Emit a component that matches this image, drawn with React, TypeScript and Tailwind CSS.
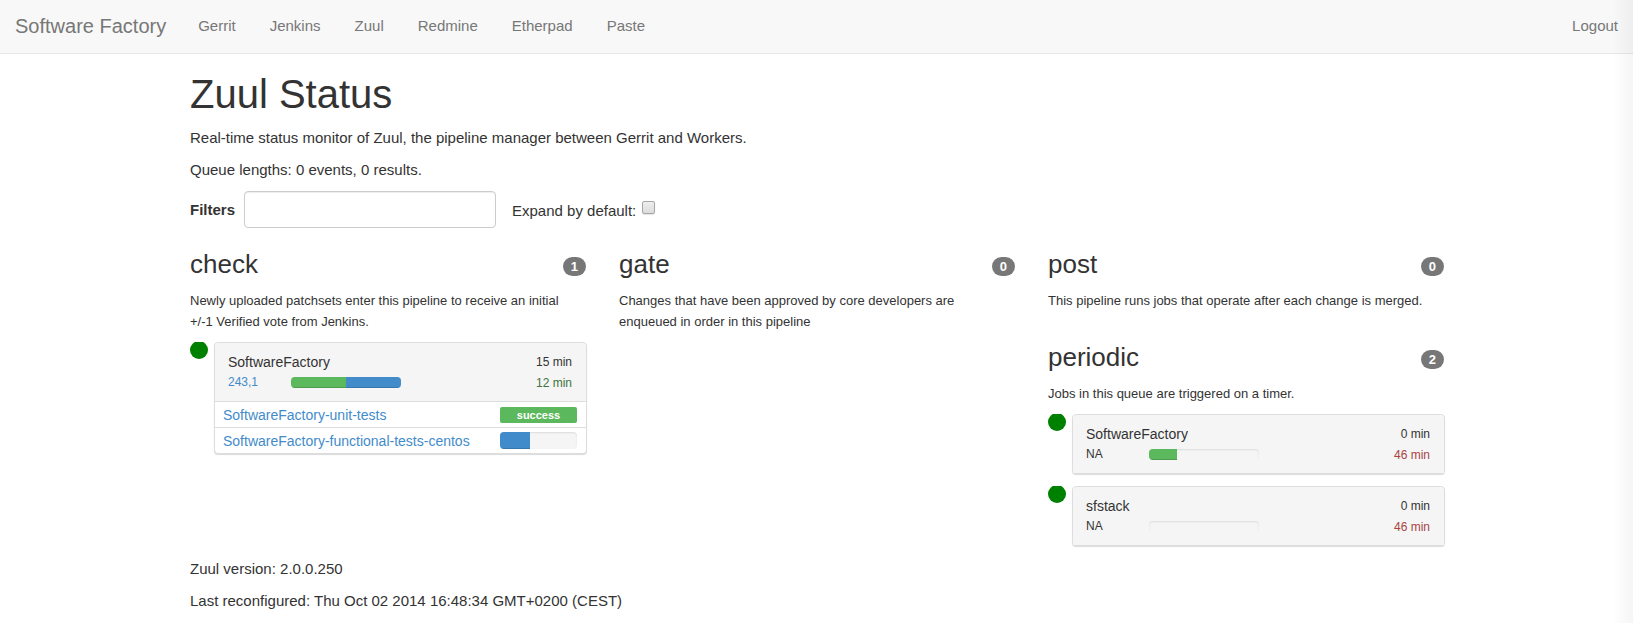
import React from "react";

type Segment = { percent: number; tone: "green" | "blue" };
type Job = { name: string; result?: string; segments?: Segment[] };
type Change = {
  project: string;
  id: string;
  linked?: boolean;
  segments: Segment[];
  remaining: string;
  enqueued: string;
  late?: boolean;
  jobs?: Job[];
};
type Pipeline = { name: string; description: string; changes: Change[] };

const links = ["Gerrit", "Jenkins", "Zuul", "Redmine", "Etherpad", "Paste"];

const columns: Pipeline[][] = [
  [
    {
      name: "check",
      description:
        "Newly uploaded patchsets enter this pipeline to receive an initial +/-1 Verified vote from Jenkins.",
      changes: [
        {
          project: "SoftwareFactory",
          id: "243,1",
          linked: true,
          segments: [
            { percent: 50, tone: "green" },
            { percent: 50, tone: "blue" },
          ],
          remaining: "15 min",
          enqueued: "12 min",
          jobs: [
            { name: "SoftwareFactory-unit-tests", result: "success" },
            {
              name: "SoftwareFactory-functional-tests-centos",
              segments: [{ percent: 39, tone: "blue" }],
            },
          ],
        },
      ],
    },
  ],
  [
    {
      name: "gate",
      description:
        "Changes that have been approved by core developers are enqueued in order in this pipeline",
      changes: [],
    },
  ],
  [
    {
      name: "post",
      description: "This pipeline runs jobs that operate after each change is merged.",
      changes: [],
    },
    {
      name: "periodic",
      description: "Jobs in this queue are triggered on a timer.",
      changes: [
        {
          project: "SoftwareFactory",
          id: "NA",
          segments: [{ percent: 25, tone: "green" }],
          remaining: "0 min",
          enqueued: "46 min",
          late: true,
        },
        {
          project: "sfstack",
          id: "NA",
          segments: [],
          remaining: "0 min",
          enqueued: "46 min",
          late: true,
        },
      ],
    },
  ],
];

function Progress({ segments, className }: { segments: Segment[]; className: string }) {
  return (
    <div
      className={`flex overflow-hidden rounded bg-[#f5f5f5] shadow-[inset_0_1px_2px_rgba(0,0,0,0.1)] ${className}`}
    >
      {segments.map((s) => (
        <div
          key={s.tone}
          className={`shadow-[inset_0_-1px_0_rgba(0,0,0,0.15)] ${
            s.tone === "green" ? "bg-[#5cb85c]" : "bg-[#428bca]"
          }`}
          style={{ width: `${s.percent}%` }}
        />
      ))}
    </div>
  );
}

function ChangePanel({ change }: { change: Change }) {
  return (
    <div className="flex items-start gap-1.5">
      <svg width="18" height="17" viewBox="0 0 18 17" className="shrink-0" aria-hidden="true">
        <circle cx="9" cy="8" r="9" fill="#008000" />
      </svg>
      <div className="min-w-0 flex-1 rounded border border-[#dddddd] bg-white shadow-[0_1px_1px_rgba(0,0,0,0.15)]">
        <div className="flex justify-between rounded-t bg-[#f5f5f5] pt-[9px] pr-[14px] pb-2 pl-[13px]">
          <div>
            <div className="text-[14px] leading-5">{change.project}</div>
            <div className="flex items-center text-[12px] leading-[21px]">
              <div className="w-[63px]">
                {change.linked ? (
                  <a href="#change" className="text-[#428bca]">
                    {change.id}
                  </a>
                ) : (
                  change.id
                )}
              </div>
              <Progress segments={change.segments} className="h-[11px] w-[110px]" />
            </div>
          </div>
          <div className="text-right text-[12px]">
            <div className="leading-[21px]">{change.remaining}</div>
            <div className={change.late ? "leading-5 text-[#a94442]" : "leading-5 text-[#3c763d]"}>
              {change.enqueued}
            </div>
          </div>
        </div>
        {change.jobs && (
          <ul>
            {change.jobs.map((job) => (
              <li
                key={job.name}
                className="flex items-center justify-between border-t border-[#dddddd] pt-0.5 pr-[9px] pb-0.5 pl-2 text-[14px] leading-[21px]"
              >
                <a href="#job" className="pt-0.5 leading-[19px] text-[#428bca]">
                  {job.name}
                </a>
                {job.result ? (
                  <span className="w-[77px] rounded-[2px] bg-[#5cb85c] text-center text-[11px] leading-4 font-bold text-white">
                    {job.result}
                  </span>
                ) : (
                  <Progress segments={job.segments ?? []} className="h-[17px] w-[77px]" />
                )}
              </li>
            ))}
          </ul>
        )}
      </div>
    </div>
  );
}

function PipelineSection({ pipeline }: { pipeline: Pipeline }) {
  return (
    <section>
      <div className="flex items-center justify-between">
        <h3 className="text-[26px] leading-[29px]">{pipeline.name}</h3>
        <span className="mt-1 mr-px rounded-full bg-[#777777] px-2 text-[13px] leading-[19px] font-bold text-white">
          {pipeline.changes.length}
        </span>
      </div>
      <p className="mt-[11px] pr-4 text-[13px] leading-[21px]">{pipeline.description}</p>
      {pipeline.changes.length > 0 && (
        <div className="mt-2.5 flex flex-col gap-3">
          {pipeline.changes.map((c) => (
            <ChangePanel key={c.project} change={c} />
          ))}
        </div>
      )}
    </section>
  );
}

export default function App() {
  return (
    <div className="relative min-h-screen bg-white font-['Liberation_Sans',Arial,sans-serif] text-[15px] leading-[22px] text-[#333333]">
      <nav className="flex items-center justify-between border-b border-[#e7e7e7] bg-[#f8f8f8] pr-[15px] pl-[15px] text-[#777777]">
        <div className="flex items-center">
          <a href="#home" className="py-4 text-[20px] leading-[21px]">
            Software Factory
          </a>
          <ul className="flex gap-[34px] pb-0.5 pl-8">
            {links.map((l) => (
              <li key={l}>
                <a href={`#${l.toLowerCase()}`}>{l}</a>
              </li>
            ))}
          </ul>
        </div>
        <a href="#logout" className="pb-0.5">
          Logout
        </a>
      </nav>

      <main className="mx-auto max-w-[1287px] pt-[18px] pr-[15px] pb-4 pl-[17px]">
        <h1 className="text-[40px] leading-[44px]">Zuul Status</h1>
        <p className="mt-[11px]">
          Real-time status monitor of Zuul, the pipeline manager between Gerrit and Workers.
        </p>
        <p className="mt-2.5">Queue lengths: 0 events, 0 results.</p>

        <form className="mt-2.5 flex items-center">
          <label htmlFor="filters" className="font-bold">
            Filters
          </label>
          <input
            id="filters"
            type="text"
            className="ml-[9px] h-[37px] w-[252px] rounded border border-[#cccccc] bg-white px-3 shadow-[inset_0_1px_1px_rgba(0,0,0,0.075)]"
          />
          <label htmlFor="expand" className="ml-4 pt-0.5">
            Expand by default:
          </label>
          <input
            id="expand"
            type="checkbox"
            className="mb-1 ml-1.5 size-[13px] appearance-none rounded-[2px] border border-[#a6a6a6] bg-linear-to-b from-[#eeeeee] to-[#dcdcdc] shadow-[0_1px_1px_rgba(0,0,0,0.1)] checked:bg-[#428bca] checked:bg-none"
          />
        </form>

        <div className="mt-[22px] grid grid-cols-3 gap-8">
          {columns.map((column) => (
            <div key={column[0].name} className="flex flex-col gap-8">
              {column.map((p) => (
                <PipelineSection key={p.name} pipeline={p} />
              ))}
            </div>
          ))}
        </div>

        <p className="mt-3">Zuul version: 2.0.0.250</p>
        <p className="mt-2.5">Last reconfigured: Thu Oct 02 2014 16:48:34 GMT+0200 (CEST)</p>
      </main>

      <div className="pointer-events-none absolute inset-y-0 right-0 w-5 bg-linear-to-l from-black/4 to-transparent" />
    </div>
  );
}
